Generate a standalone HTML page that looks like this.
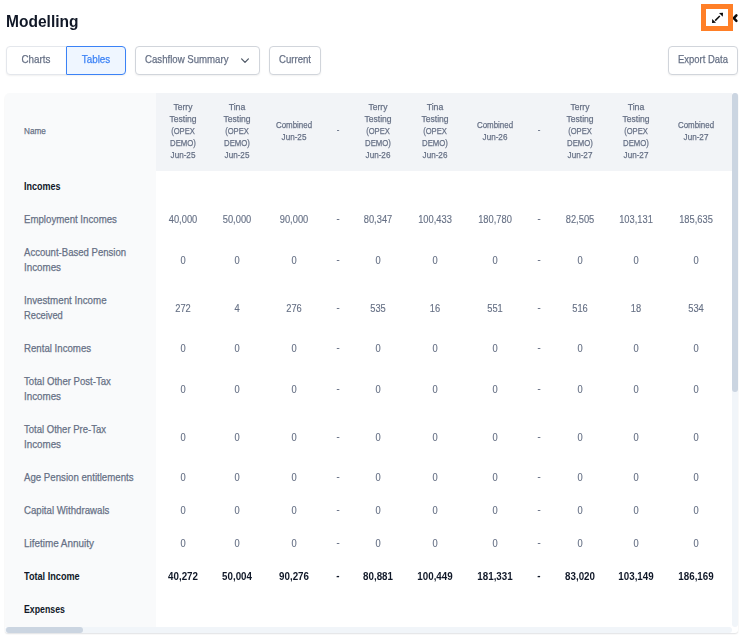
<!DOCTYPE html>
<html lang="en"><head><meta charset="utf-8"><title>Modelling</title>
<style>
html,body{margin:0;padding:0;background:#fff;}
body{width:746px;height:639px;position:relative;overflow:hidden;font-family:"Liberation Sans",Arial,sans-serif;}
.t{position:absolute;white-space:nowrap;line-height:1;display:block;margin:0;padding:0;font-weight:400;-webkit-text-stroke:0.25px currentColor;}
h1.t{font-weight:700;}
.abs{position:absolute;box-sizing:border-box;}
.btn{position:absolute;box-sizing:border-box;margin:0;padding:0;font:inherit;background:#fff;border:1px solid #d1d5db;border-radius:4px;box-shadow:0 1px 2px rgba(0,0,0,.06);overflow:visible;}
.tbl{border-radius:5px 3px 3px 3px;background:#fff;box-shadow:0 1px 1.5px rgba(16,24,40,.13);}
.row{display:contents;}
.glay{will-change:transform;}
.lay{left:0;top:0;width:727px;height:534px;will-change:transform;z-index:1;}
</style></head><body>
<header class="abs glay" style="left:0;top:0;width:696px;height:40px;">
<h1 class="t" style="left:6.20px;top:12.81px;font-size:17px;color:#111827;font-weight:700;-webkit-text-stroke:0;transform:scaleX(0.9140);transform-origin:0 50%;">Modelling</h1>
</header>
<div role="toolbar" aria-label="Modelling view" class="abs glay" style="left:0;top:40px;width:746px;height:44px;">
<button type="button" class="btn" style="left:6px;top:6px;width:61px;height:29px;border-radius:4px 0 0 4px;border-color:#e4e7ec;"><span class="t" style="left:29.20px;top:6.77px;font-size:11.5px;color:#667085;transform:translateX(-50%) scaleX(0.8562);transform-origin:50% 50%;">Charts</span></button>
<button type="button" class="btn" style="left:66px;top:6px;width:60px;height:29px;border-radius:1px 4px 4px 1px;border-color:#3b82f6;background:#eff6ff;"><span class="t" style="left:28.80px;top:6.77px;font-size:11.5px;color:#3b82f6;transform:translateX(-50%) scaleX(0.8573);transform-origin:50% 50%;">Tables</span></button>
<button type="button" class="btn" style="left:135px;top:6px;width:125px;height:29px;"><span class="t" style="left:9.00px;top:6.77px;font-size:11.5px;color:#667085;transform:scaleX(0.8375);transform-origin:0 50%;">Cashflow Summary</span><svg class="abs" style="left:104px;top:10px" width="10" height="8" viewBox="0 0 10 8" aria-hidden="true"><path d="M1.6 1.9 L5 5.3 L8.4 1.9" fill="none" stroke="#4b5563" stroke-width="1.2" stroke-linecap="round" stroke-linejoin="round"/></svg></button>
<button type="button" class="btn" style="left:269px;top:6px;width:52px;height:29px;"><span class="t" style="left:24.90px;top:6.77px;font-size:11.5px;color:#667085;transform:translateX(-50%) scaleX(0.8345);transform-origin:50% 50%;">Current</span></button>
<button type="button" class="btn" style="left:668px;top:6px;width:70px;height:29px;"><span class="t" style="left:34.30px;top:6.77px;font-size:11.5px;color:#667085;transform:translateX(-50%) scaleX(0.8234);transform-origin:50% 50%;">Export Data</span></button>
</div>
<svg class="abs" style="left:696px;top:0px" width="50" height="36" viewBox="696 0 50 36" role="img" aria-label="Expand">
<path d="M736.4 15.3 L733.8 18.1 L736.4 20.9" fill="none" stroke="#0b0b0b" stroke-width="2.5" stroke-linecap="round" stroke-linejoin="round"/>
<rect x="703.5" y="6.5" width="27" height="22" fill="#fff" stroke="#ff7f27" stroke-width="5"/>
<path d="M715.2 20.6 L719.8 16.0" fill="none" stroke="#0b0b0b" stroke-width="1.5"/>
<path d="M723 12.8 L719 13.0 L722.8 16.8 Z" fill="#0b0b0b"/>
<path d="M712 23 L716 22.8 L712.2 19 Z" fill="#0b0b0b"/>
</svg>
<div role="table" aria-label="Cashflow Summary" class="abs tbl" style="left:5px;top:93px;width:733px;height:540px;">
<div class="abs" style="left:151px;top:0;width:576px;height:78px;background:#f2f4f7;"></div>
<div class="abs" style="left:0;top:0;width:151px;height:534px;background:#f9fafb;border-radius:5px 0 0 0;"></div>
<div class="abs" style="left:727px;top:0;width:6px;height:534px;background:#f1f5f9;border-radius:3px;"></div>
<div class="abs" style="left:727px;top:0;width:6px;height:299px;background:#cbd5e1;border-radius:3px;"></div>
<div class="abs" style="left:0;top:534px;width:727px;height:6px;background:#f1f5f9;border-radius:3px;"></div>
<div class="abs" style="left:1px;top:534px;width:77px;height:6px;background:#cbd5e1;border-radius:3px;"></div>
<div role="row" class="row">
<span class="t" role="columnheader" style="left:19.00px;top:32.96px;font-size:9.5px;color:#667085;-webkit-text-stroke:0.25px currentColor;transform:scaleX(0.8600);transform-origin:0 50%;">Name</span>
<div class="abs lay" role="presentation">
<div role="columnheader" class="row"><span class="t" style="left:177.70px;top:9.36px;font-size:9.5px;color:#667085;-webkit-text-stroke:0.25px currentColor;transform:translateX(-50%) scaleX(0.8975);transform-origin:50% 50%;">Terry</span><span class="t" style="left:177.70px;top:21.36px;font-size:9.5px;color:#667085;-webkit-text-stroke:0.25px currentColor;transform:translateX(-50%) scaleX(0.9005);transform-origin:50% 50%;">Testing</span><span class="t" style="left:177.70px;top:33.36px;font-size:9.5px;color:#667085;-webkit-text-stroke:0.25px currentColor;transform:translateX(-50%) scaleX(0.8030);transform-origin:50% 50%;">(OPEX</span><span class="t" style="left:177.70px;top:45.36px;font-size:9.5px;color:#667085;-webkit-text-stroke:0.25px currentColor;transform:translateX(-50%) scaleX(0.8167);transform-origin:50% 50%;">DEMO)</span><span class="t" style="left:177.70px;top:57.36px;font-size:9.5px;color:#667085;-webkit-text-stroke:0.25px currentColor;transform:translateX(-50%) scaleX(0.8530);transform-origin:50% 50%;">Jun-25</span></div>
<div role="columnheader" class="row"><span class="t" style="left:231.50px;top:9.36px;font-size:9.5px;color:#667085;-webkit-text-stroke:0.25px currentColor;transform:translateX(-50%) scaleX(0.9200);transform-origin:50% 50%;">Tina</span><span class="t" style="left:231.50px;top:21.36px;font-size:9.5px;color:#667085;-webkit-text-stroke:0.25px currentColor;transform:translateX(-50%) scaleX(0.9005);transform-origin:50% 50%;">Testing</span><span class="t" style="left:231.50px;top:33.36px;font-size:9.5px;color:#667085;-webkit-text-stroke:0.25px currentColor;transform:translateX(-50%) scaleX(0.8030);transform-origin:50% 50%;">(OPEX</span><span class="t" style="left:231.50px;top:45.36px;font-size:9.5px;color:#667085;-webkit-text-stroke:0.25px currentColor;transform:translateX(-50%) scaleX(0.8167);transform-origin:50% 50%;">DEMO)</span><span class="t" style="left:231.50px;top:57.36px;font-size:9.5px;color:#667085;-webkit-text-stroke:0.25px currentColor;transform:translateX(-50%) scaleX(0.8530);transform-origin:50% 50%;">Jun-25</span></div>
<div role="columnheader" class="row"><span class="t" style="left:288.70px;top:26.96px;font-size:9.5px;color:#667085;-webkit-text-stroke:0.25px currentColor;transform:translateX(-50%) scaleX(0.8347);transform-origin:50% 50%;">Combined</span><span class="t" style="left:288.70px;top:38.96px;font-size:9.5px;color:#667085;-webkit-text-stroke:0.25px currentColor;transform:translateX(-50%) scaleX(0.8530);transform-origin:50% 50%;">Jun-25</span></div>
<span class="t" role="columnheader" style="left:332.70px;top:32.16px;font-size:9.5px;color:#667085;-webkit-text-stroke:0.25px currentColor;transform:translateX(-50%) scaleX(0.8300);transform-origin:50% 50%;">-</span>
<div role="columnheader" class="row"><span class="t" style="left:373.40px;top:9.36px;font-size:9.5px;color:#667085;-webkit-text-stroke:0.25px currentColor;transform:translateX(-50%) scaleX(0.8975);transform-origin:50% 50%;">Terry</span><span class="t" style="left:373.40px;top:21.36px;font-size:9.5px;color:#667085;-webkit-text-stroke:0.25px currentColor;transform:translateX(-50%) scaleX(0.9005);transform-origin:50% 50%;">Testing</span><span class="t" style="left:373.40px;top:33.36px;font-size:9.5px;color:#667085;-webkit-text-stroke:0.25px currentColor;transform:translateX(-50%) scaleX(0.8030);transform-origin:50% 50%;">(OPEX</span><span class="t" style="left:373.40px;top:45.36px;font-size:9.5px;color:#667085;-webkit-text-stroke:0.25px currentColor;transform:translateX(-50%) scaleX(0.8167);transform-origin:50% 50%;">DEMO)</span><span class="t" style="left:373.40px;top:57.36px;font-size:9.5px;color:#667085;-webkit-text-stroke:0.25px currentColor;transform:translateX(-50%) scaleX(0.8530);transform-origin:50% 50%;">Jun-26</span></div>
<div role="columnheader" class="row"><span class="t" style="left:429.90px;top:9.36px;font-size:9.5px;color:#667085;-webkit-text-stroke:0.25px currentColor;transform:translateX(-50%) scaleX(0.9200);transform-origin:50% 50%;">Tina</span><span class="t" style="left:429.90px;top:21.36px;font-size:9.5px;color:#667085;-webkit-text-stroke:0.25px currentColor;transform:translateX(-50%) scaleX(0.9005);transform-origin:50% 50%;">Testing</span><span class="t" style="left:429.90px;top:33.36px;font-size:9.5px;color:#667085;-webkit-text-stroke:0.25px currentColor;transform:translateX(-50%) scaleX(0.8030);transform-origin:50% 50%;">(OPEX</span><span class="t" style="left:429.90px;top:45.36px;font-size:9.5px;color:#667085;-webkit-text-stroke:0.25px currentColor;transform:translateX(-50%) scaleX(0.8167);transform-origin:50% 50%;">DEMO)</span><span class="t" style="left:429.90px;top:57.36px;font-size:9.5px;color:#667085;-webkit-text-stroke:0.25px currentColor;transform:translateX(-50%) scaleX(0.8530);transform-origin:50% 50%;">Jun-26</span></div>
<div role="columnheader" class="row"><span class="t" style="left:489.80px;top:26.96px;font-size:9.5px;color:#667085;-webkit-text-stroke:0.25px currentColor;transform:translateX(-50%) scaleX(0.8347);transform-origin:50% 50%;">Combined</span><span class="t" style="left:489.80px;top:38.96px;font-size:9.5px;color:#667085;-webkit-text-stroke:0.25px currentColor;transform:translateX(-50%) scaleX(0.8530);transform-origin:50% 50%;">Jun-26</span></div>
<span class="t" role="columnheader" style="left:534.30px;top:32.16px;font-size:9.5px;color:#667085;-webkit-text-stroke:0.25px currentColor;transform:translateX(-50%) scaleX(0.8300);transform-origin:50% 50%;">-</span>
<div role="columnheader" class="row"><span class="t" style="left:574.90px;top:9.36px;font-size:9.5px;color:#667085;-webkit-text-stroke:0.25px currentColor;transform:translateX(-50%) scaleX(0.8975);transform-origin:50% 50%;">Terry</span><span class="t" style="left:574.90px;top:21.36px;font-size:9.5px;color:#667085;-webkit-text-stroke:0.25px currentColor;transform:translateX(-50%) scaleX(0.9005);transform-origin:50% 50%;">Testing</span><span class="t" style="left:574.90px;top:33.36px;font-size:9.5px;color:#667085;-webkit-text-stroke:0.25px currentColor;transform:translateX(-50%) scaleX(0.8030);transform-origin:50% 50%;">(OPEX</span><span class="t" style="left:574.90px;top:45.36px;font-size:9.5px;color:#667085;-webkit-text-stroke:0.25px currentColor;transform:translateX(-50%) scaleX(0.8167);transform-origin:50% 50%;">DEMO)</span><span class="t" style="left:574.90px;top:57.36px;font-size:9.5px;color:#667085;-webkit-text-stroke:0.25px currentColor;transform:translateX(-50%) scaleX(0.8530);transform-origin:50% 50%;">Jun-27</span></div>
<div role="columnheader" class="row"><span class="t" style="left:631.00px;top:9.36px;font-size:9.5px;color:#667085;-webkit-text-stroke:0.25px currentColor;transform:translateX(-50%) scaleX(0.9200);transform-origin:50% 50%;">Tina</span><span class="t" style="left:631.00px;top:21.36px;font-size:9.5px;color:#667085;-webkit-text-stroke:0.25px currentColor;transform:translateX(-50%) scaleX(0.9005);transform-origin:50% 50%;">Testing</span><span class="t" style="left:631.00px;top:33.36px;font-size:9.5px;color:#667085;-webkit-text-stroke:0.25px currentColor;transform:translateX(-50%) scaleX(0.8030);transform-origin:50% 50%;">(OPEX</span><span class="t" style="left:631.00px;top:45.36px;font-size:9.5px;color:#667085;-webkit-text-stroke:0.25px currentColor;transform:translateX(-50%) scaleX(0.8167);transform-origin:50% 50%;">DEMO)</span><span class="t" style="left:631.00px;top:57.36px;font-size:9.5px;color:#667085;-webkit-text-stroke:0.25px currentColor;transform:translateX(-50%) scaleX(0.8530);transform-origin:50% 50%;">Jun-27</span></div>
<div role="columnheader" class="row"><span class="t" style="left:690.70px;top:26.96px;font-size:9.5px;color:#667085;-webkit-text-stroke:0.25px currentColor;transform:translateX(-50%) scaleX(0.8347);transform-origin:50% 50%;">Combined</span><span class="t" style="left:690.70px;top:38.96px;font-size:9.5px;color:#667085;-webkit-text-stroke:0.25px currentColor;transform:translateX(-50%) scaleX(0.8530);transform-origin:50% 50%;">Jun-27</span></div>
</div></div>
<div role="row" class="row">
<span class="t" role="rowheader" style="left:19.00px;top:88.27px;font-size:11.5px;color:#101828;font-weight:700;-webkit-text-stroke:0;transform:scaleX(0.7830);transform-origin:0 50%;">Incomes</span>
</div>
<div role="row" class="row">
<span class="t" role="rowheader" style="left:19.00px;top:121.27px;font-size:11.5px;color:#667085;-webkit-text-stroke:0.25px currentColor;transform:scaleX(0.8400);transform-origin:0 50%;">Employment Incomes</span>
<div class="abs lay" role="presentation">
<span class="t" role="cell" style="left:177.70px;top:121.27px;font-size:11.5px;color:#667085;-webkit-text-stroke:0.15px currentColor;transform:translateX(-50%) scaleX(0.8100);transform-origin:50% 50%;">40,000</span>
<span class="t" role="cell" style="left:231.50px;top:121.27px;font-size:11.5px;color:#667085;-webkit-text-stroke:0.15px currentColor;transform:translateX(-50%) scaleX(0.8100);transform-origin:50% 50%;">50,000</span>
<span class="t" role="cell" style="left:288.70px;top:121.27px;font-size:11.5px;color:#667085;-webkit-text-stroke:0.15px currentColor;transform:translateX(-50%) scaleX(0.8100);transform-origin:50% 50%;">90,000</span>
<span class="t" role="cell" style="left:332.70px;top:120.37px;font-size:11.5px;color:#667085;-webkit-text-stroke:0.15px currentColor;transform:translateX(-50%) scaleX(0.8100);transform-origin:50% 50%;">-</span>
<span class="t" role="cell" style="left:373.40px;top:121.27px;font-size:11.5px;color:#667085;-webkit-text-stroke:0.15px currentColor;transform:translateX(-50%) scaleX(0.8100);transform-origin:50% 50%;">80,347</span>
<span class="t" role="cell" style="left:429.90px;top:121.27px;font-size:11.5px;color:#667085;-webkit-text-stroke:0.15px currentColor;transform:translateX(-50%) scaleX(0.8100);transform-origin:50% 50%;">100,433</span>
<span class="t" role="cell" style="left:489.80px;top:121.27px;font-size:11.5px;color:#667085;-webkit-text-stroke:0.15px currentColor;transform:translateX(-50%) scaleX(0.8100);transform-origin:50% 50%;">180,780</span>
<span class="t" role="cell" style="left:534.30px;top:120.37px;font-size:11.5px;color:#667085;-webkit-text-stroke:0.15px currentColor;transform:translateX(-50%) scaleX(0.8100);transform-origin:50% 50%;">-</span>
<span class="t" role="cell" style="left:574.90px;top:121.27px;font-size:11.5px;color:#667085;-webkit-text-stroke:0.15px currentColor;transform:translateX(-50%) scaleX(0.8100);transform-origin:50% 50%;">82,505</span>
<span class="t" role="cell" style="left:631.00px;top:121.27px;font-size:11.5px;color:#667085;-webkit-text-stroke:0.15px currentColor;transform:translateX(-50%) scaleX(0.8100);transform-origin:50% 50%;">103,131</span>
<span class="t" role="cell" style="left:690.70px;top:121.27px;font-size:11.5px;color:#667085;-webkit-text-stroke:0.15px currentColor;transform:translateX(-50%) scaleX(0.8100);transform-origin:50% 50%;">185,635</span>
</div>
</div>
<div role="row" class="row">
<div role="rowheader" class="row"><span class="t" style="left:19.00px;top:154.27px;font-size:11.5px;color:#667085;-webkit-text-stroke:0.25px currentColor;transform:scaleX(0.8320);transform-origin:0 50%;">Account-Based Pension</span><span class="t" style="left:19.00px;top:169.27px;font-size:11.5px;color:#667085;-webkit-text-stroke:0.25px currentColor;transform:scaleX(0.8516);transform-origin:0 50%;">Incomes</span></div>
<div class="abs lay" role="presentation">
<span class="t" role="cell" style="left:177.70px;top:161.77px;font-size:11.5px;color:#667085;-webkit-text-stroke:0.15px currentColor;transform:translateX(-50%) scaleX(0.8100);transform-origin:50% 50%;">0</span>
<span class="t" role="cell" style="left:231.50px;top:161.77px;font-size:11.5px;color:#667085;-webkit-text-stroke:0.15px currentColor;transform:translateX(-50%) scaleX(0.8100);transform-origin:50% 50%;">0</span>
<span class="t" role="cell" style="left:288.70px;top:161.77px;font-size:11.5px;color:#667085;-webkit-text-stroke:0.15px currentColor;transform:translateX(-50%) scaleX(0.8100);transform-origin:50% 50%;">0</span>
<span class="t" role="cell" style="left:332.70px;top:160.87px;font-size:11.5px;color:#667085;-webkit-text-stroke:0.15px currentColor;transform:translateX(-50%) scaleX(0.8100);transform-origin:50% 50%;">-</span>
<span class="t" role="cell" style="left:373.40px;top:161.77px;font-size:11.5px;color:#667085;-webkit-text-stroke:0.15px currentColor;transform:translateX(-50%) scaleX(0.8100);transform-origin:50% 50%;">0</span>
<span class="t" role="cell" style="left:429.90px;top:161.77px;font-size:11.5px;color:#667085;-webkit-text-stroke:0.15px currentColor;transform:translateX(-50%) scaleX(0.8100);transform-origin:50% 50%;">0</span>
<span class="t" role="cell" style="left:489.80px;top:161.77px;font-size:11.5px;color:#667085;-webkit-text-stroke:0.15px currentColor;transform:translateX(-50%) scaleX(0.8100);transform-origin:50% 50%;">0</span>
<span class="t" role="cell" style="left:534.30px;top:160.87px;font-size:11.5px;color:#667085;-webkit-text-stroke:0.15px currentColor;transform:translateX(-50%) scaleX(0.8100);transform-origin:50% 50%;">-</span>
<span class="t" role="cell" style="left:574.90px;top:161.77px;font-size:11.5px;color:#667085;-webkit-text-stroke:0.15px currentColor;transform:translateX(-50%) scaleX(0.8100);transform-origin:50% 50%;">0</span>
<span class="t" role="cell" style="left:631.00px;top:161.77px;font-size:11.5px;color:#667085;-webkit-text-stroke:0.15px currentColor;transform:translateX(-50%) scaleX(0.8100);transform-origin:50% 50%;">0</span>
<span class="t" role="cell" style="left:690.70px;top:161.77px;font-size:11.5px;color:#667085;-webkit-text-stroke:0.15px currentColor;transform:translateX(-50%) scaleX(0.8100);transform-origin:50% 50%;">0</span>
</div>
</div>
<div role="row" class="row">
<div role="rowheader" class="row"><span class="t" style="left:19.00px;top:202.27px;font-size:11.5px;color:#667085;-webkit-text-stroke:0.25px currentColor;transform:scaleX(0.8500);transform-origin:0 50%;">Investment Income</span><span class="t" style="left:19.00px;top:217.27px;font-size:11.5px;color:#667085;-webkit-text-stroke:0.25px currentColor;transform:scaleX(0.8085);transform-origin:0 50%;">Received</span></div>
<div class="abs lay" role="presentation">
<span class="t" role="cell" style="left:177.70px;top:209.77px;font-size:11.5px;color:#667085;-webkit-text-stroke:0.15px currentColor;transform:translateX(-50%) scaleX(0.8100);transform-origin:50% 50%;">272</span>
<span class="t" role="cell" style="left:231.50px;top:209.77px;font-size:11.5px;color:#667085;-webkit-text-stroke:0.15px currentColor;transform:translateX(-50%) scaleX(0.8100);transform-origin:50% 50%;">4</span>
<span class="t" role="cell" style="left:288.70px;top:209.77px;font-size:11.5px;color:#667085;-webkit-text-stroke:0.15px currentColor;transform:translateX(-50%) scaleX(0.8100);transform-origin:50% 50%;">276</span>
<span class="t" role="cell" style="left:332.70px;top:208.87px;font-size:11.5px;color:#667085;-webkit-text-stroke:0.15px currentColor;transform:translateX(-50%) scaleX(0.8100);transform-origin:50% 50%;">-</span>
<span class="t" role="cell" style="left:373.40px;top:209.77px;font-size:11.5px;color:#667085;-webkit-text-stroke:0.15px currentColor;transform:translateX(-50%) scaleX(0.8100);transform-origin:50% 50%;">535</span>
<span class="t" role="cell" style="left:429.90px;top:209.77px;font-size:11.5px;color:#667085;-webkit-text-stroke:0.15px currentColor;transform:translateX(-50%) scaleX(0.8100);transform-origin:50% 50%;">16</span>
<span class="t" role="cell" style="left:489.80px;top:209.77px;font-size:11.5px;color:#667085;-webkit-text-stroke:0.15px currentColor;transform:translateX(-50%) scaleX(0.8100);transform-origin:50% 50%;">551</span>
<span class="t" role="cell" style="left:534.30px;top:208.87px;font-size:11.5px;color:#667085;-webkit-text-stroke:0.15px currentColor;transform:translateX(-50%) scaleX(0.8100);transform-origin:50% 50%;">-</span>
<span class="t" role="cell" style="left:574.90px;top:209.77px;font-size:11.5px;color:#667085;-webkit-text-stroke:0.15px currentColor;transform:translateX(-50%) scaleX(0.8100);transform-origin:50% 50%;">516</span>
<span class="t" role="cell" style="left:631.00px;top:209.77px;font-size:11.5px;color:#667085;-webkit-text-stroke:0.15px currentColor;transform:translateX(-50%) scaleX(0.8100);transform-origin:50% 50%;">18</span>
<span class="t" role="cell" style="left:690.70px;top:209.77px;font-size:11.5px;color:#667085;-webkit-text-stroke:0.15px currentColor;transform:translateX(-50%) scaleX(0.8100);transform-origin:50% 50%;">534</span>
</div>
</div>
<div role="row" class="row">
<span class="t" role="rowheader" style="left:19.00px;top:250.27px;font-size:11.5px;color:#667085;-webkit-text-stroke:0.25px currentColor;transform:scaleX(0.8400);transform-origin:0 50%;">Rental Incomes</span>
<div class="abs lay" role="presentation">
<span class="t" role="cell" style="left:177.70px;top:250.27px;font-size:11.5px;color:#667085;-webkit-text-stroke:0.15px currentColor;transform:translateX(-50%) scaleX(0.8100);transform-origin:50% 50%;">0</span>
<span class="t" role="cell" style="left:231.50px;top:250.27px;font-size:11.5px;color:#667085;-webkit-text-stroke:0.15px currentColor;transform:translateX(-50%) scaleX(0.8100);transform-origin:50% 50%;">0</span>
<span class="t" role="cell" style="left:288.70px;top:250.27px;font-size:11.5px;color:#667085;-webkit-text-stroke:0.15px currentColor;transform:translateX(-50%) scaleX(0.8100);transform-origin:50% 50%;">0</span>
<span class="t" role="cell" style="left:332.70px;top:249.37px;font-size:11.5px;color:#667085;-webkit-text-stroke:0.15px currentColor;transform:translateX(-50%) scaleX(0.8100);transform-origin:50% 50%;">-</span>
<span class="t" role="cell" style="left:373.40px;top:250.27px;font-size:11.5px;color:#667085;-webkit-text-stroke:0.15px currentColor;transform:translateX(-50%) scaleX(0.8100);transform-origin:50% 50%;">0</span>
<span class="t" role="cell" style="left:429.90px;top:250.27px;font-size:11.5px;color:#667085;-webkit-text-stroke:0.15px currentColor;transform:translateX(-50%) scaleX(0.8100);transform-origin:50% 50%;">0</span>
<span class="t" role="cell" style="left:489.80px;top:250.27px;font-size:11.5px;color:#667085;-webkit-text-stroke:0.15px currentColor;transform:translateX(-50%) scaleX(0.8100);transform-origin:50% 50%;">0</span>
<span class="t" role="cell" style="left:534.30px;top:249.37px;font-size:11.5px;color:#667085;-webkit-text-stroke:0.15px currentColor;transform:translateX(-50%) scaleX(0.8100);transform-origin:50% 50%;">-</span>
<span class="t" role="cell" style="left:574.90px;top:250.27px;font-size:11.5px;color:#667085;-webkit-text-stroke:0.15px currentColor;transform:translateX(-50%) scaleX(0.8100);transform-origin:50% 50%;">0</span>
<span class="t" role="cell" style="left:631.00px;top:250.27px;font-size:11.5px;color:#667085;-webkit-text-stroke:0.15px currentColor;transform:translateX(-50%) scaleX(0.8100);transform-origin:50% 50%;">0</span>
<span class="t" role="cell" style="left:690.70px;top:250.27px;font-size:11.5px;color:#667085;-webkit-text-stroke:0.15px currentColor;transform:translateX(-50%) scaleX(0.8100);transform-origin:50% 50%;">0</span>
</div>
</div>
<div role="row" class="row">
<div role="rowheader" class="row"><span class="t" style="left:19.00px;top:283.27px;font-size:11.5px;color:#667085;-webkit-text-stroke:0.25px currentColor;transform:scaleX(0.8340);transform-origin:0 50%;">Total Other Post-Tax</span><span class="t" style="left:19.00px;top:298.27px;font-size:11.5px;color:#667085;-webkit-text-stroke:0.25px currentColor;transform:scaleX(0.8516);transform-origin:0 50%;">Incomes</span></div>
<div class="abs lay" role="presentation">
<span class="t" role="cell" style="left:177.70px;top:290.77px;font-size:11.5px;color:#667085;-webkit-text-stroke:0.15px currentColor;transform:translateX(-50%) scaleX(0.8100);transform-origin:50% 50%;">0</span>
<span class="t" role="cell" style="left:231.50px;top:290.77px;font-size:11.5px;color:#667085;-webkit-text-stroke:0.15px currentColor;transform:translateX(-50%) scaleX(0.8100);transform-origin:50% 50%;">0</span>
<span class="t" role="cell" style="left:288.70px;top:290.77px;font-size:11.5px;color:#667085;-webkit-text-stroke:0.15px currentColor;transform:translateX(-50%) scaleX(0.8100);transform-origin:50% 50%;">0</span>
<span class="t" role="cell" style="left:332.70px;top:289.87px;font-size:11.5px;color:#667085;-webkit-text-stroke:0.15px currentColor;transform:translateX(-50%) scaleX(0.8100);transform-origin:50% 50%;">-</span>
<span class="t" role="cell" style="left:373.40px;top:290.77px;font-size:11.5px;color:#667085;-webkit-text-stroke:0.15px currentColor;transform:translateX(-50%) scaleX(0.8100);transform-origin:50% 50%;">0</span>
<span class="t" role="cell" style="left:429.90px;top:290.77px;font-size:11.5px;color:#667085;-webkit-text-stroke:0.15px currentColor;transform:translateX(-50%) scaleX(0.8100);transform-origin:50% 50%;">0</span>
<span class="t" role="cell" style="left:489.80px;top:290.77px;font-size:11.5px;color:#667085;-webkit-text-stroke:0.15px currentColor;transform:translateX(-50%) scaleX(0.8100);transform-origin:50% 50%;">0</span>
<span class="t" role="cell" style="left:534.30px;top:289.87px;font-size:11.5px;color:#667085;-webkit-text-stroke:0.15px currentColor;transform:translateX(-50%) scaleX(0.8100);transform-origin:50% 50%;">-</span>
<span class="t" role="cell" style="left:574.90px;top:290.77px;font-size:11.5px;color:#667085;-webkit-text-stroke:0.15px currentColor;transform:translateX(-50%) scaleX(0.8100);transform-origin:50% 50%;">0</span>
<span class="t" role="cell" style="left:631.00px;top:290.77px;font-size:11.5px;color:#667085;-webkit-text-stroke:0.15px currentColor;transform:translateX(-50%) scaleX(0.8100);transform-origin:50% 50%;">0</span>
<span class="t" role="cell" style="left:690.70px;top:290.77px;font-size:11.5px;color:#667085;-webkit-text-stroke:0.15px currentColor;transform:translateX(-50%) scaleX(0.8100);transform-origin:50% 50%;">0</span>
</div>
</div>
<div role="row" class="row">
<div role="rowheader" class="row"><span class="t" style="left:19.00px;top:331.27px;font-size:11.5px;color:#667085;-webkit-text-stroke:0.25px currentColor;transform:scaleX(0.8280);transform-origin:0 50%;">Total Other Pre-Tax</span><span class="t" style="left:19.00px;top:346.27px;font-size:11.5px;color:#667085;-webkit-text-stroke:0.25px currentColor;transform:scaleX(0.8516);transform-origin:0 50%;">Incomes</span></div>
<div class="abs lay" role="presentation">
<span class="t" role="cell" style="left:177.70px;top:338.77px;font-size:11.5px;color:#667085;-webkit-text-stroke:0.15px currentColor;transform:translateX(-50%) scaleX(0.8100);transform-origin:50% 50%;">0</span>
<span class="t" role="cell" style="left:231.50px;top:338.77px;font-size:11.5px;color:#667085;-webkit-text-stroke:0.15px currentColor;transform:translateX(-50%) scaleX(0.8100);transform-origin:50% 50%;">0</span>
<span class="t" role="cell" style="left:288.70px;top:338.77px;font-size:11.5px;color:#667085;-webkit-text-stroke:0.15px currentColor;transform:translateX(-50%) scaleX(0.8100);transform-origin:50% 50%;">0</span>
<span class="t" role="cell" style="left:332.70px;top:337.87px;font-size:11.5px;color:#667085;-webkit-text-stroke:0.15px currentColor;transform:translateX(-50%) scaleX(0.8100);transform-origin:50% 50%;">-</span>
<span class="t" role="cell" style="left:373.40px;top:338.77px;font-size:11.5px;color:#667085;-webkit-text-stroke:0.15px currentColor;transform:translateX(-50%) scaleX(0.8100);transform-origin:50% 50%;">0</span>
<span class="t" role="cell" style="left:429.90px;top:338.77px;font-size:11.5px;color:#667085;-webkit-text-stroke:0.15px currentColor;transform:translateX(-50%) scaleX(0.8100);transform-origin:50% 50%;">0</span>
<span class="t" role="cell" style="left:489.80px;top:338.77px;font-size:11.5px;color:#667085;-webkit-text-stroke:0.15px currentColor;transform:translateX(-50%) scaleX(0.8100);transform-origin:50% 50%;">0</span>
<span class="t" role="cell" style="left:534.30px;top:337.87px;font-size:11.5px;color:#667085;-webkit-text-stroke:0.15px currentColor;transform:translateX(-50%) scaleX(0.8100);transform-origin:50% 50%;">-</span>
<span class="t" role="cell" style="left:574.90px;top:338.77px;font-size:11.5px;color:#667085;-webkit-text-stroke:0.15px currentColor;transform:translateX(-50%) scaleX(0.8100);transform-origin:50% 50%;">0</span>
<span class="t" role="cell" style="left:631.00px;top:338.77px;font-size:11.5px;color:#667085;-webkit-text-stroke:0.15px currentColor;transform:translateX(-50%) scaleX(0.8100);transform-origin:50% 50%;">0</span>
<span class="t" role="cell" style="left:690.70px;top:338.77px;font-size:11.5px;color:#667085;-webkit-text-stroke:0.15px currentColor;transform:translateX(-50%) scaleX(0.8100);transform-origin:50% 50%;">0</span>
</div>
</div>
<div role="row" class="row">
<span class="t" role="rowheader" style="left:19.00px;top:379.27px;font-size:11.5px;color:#667085;-webkit-text-stroke:0.25px currentColor;transform:scaleX(0.8400);transform-origin:0 50%;">Age Pension entitlements</span>
<div class="abs lay" role="presentation">
<span class="t" role="cell" style="left:177.70px;top:379.27px;font-size:11.5px;color:#667085;-webkit-text-stroke:0.15px currentColor;transform:translateX(-50%) scaleX(0.8100);transform-origin:50% 50%;">0</span>
<span class="t" role="cell" style="left:231.50px;top:379.27px;font-size:11.5px;color:#667085;-webkit-text-stroke:0.15px currentColor;transform:translateX(-50%) scaleX(0.8100);transform-origin:50% 50%;">0</span>
<span class="t" role="cell" style="left:288.70px;top:379.27px;font-size:11.5px;color:#667085;-webkit-text-stroke:0.15px currentColor;transform:translateX(-50%) scaleX(0.8100);transform-origin:50% 50%;">0</span>
<span class="t" role="cell" style="left:332.70px;top:378.37px;font-size:11.5px;color:#667085;-webkit-text-stroke:0.15px currentColor;transform:translateX(-50%) scaleX(0.8100);transform-origin:50% 50%;">-</span>
<span class="t" role="cell" style="left:373.40px;top:379.27px;font-size:11.5px;color:#667085;-webkit-text-stroke:0.15px currentColor;transform:translateX(-50%) scaleX(0.8100);transform-origin:50% 50%;">0</span>
<span class="t" role="cell" style="left:429.90px;top:379.27px;font-size:11.5px;color:#667085;-webkit-text-stroke:0.15px currentColor;transform:translateX(-50%) scaleX(0.8100);transform-origin:50% 50%;">0</span>
<span class="t" role="cell" style="left:489.80px;top:379.27px;font-size:11.5px;color:#667085;-webkit-text-stroke:0.15px currentColor;transform:translateX(-50%) scaleX(0.8100);transform-origin:50% 50%;">0</span>
<span class="t" role="cell" style="left:534.30px;top:378.37px;font-size:11.5px;color:#667085;-webkit-text-stroke:0.15px currentColor;transform:translateX(-50%) scaleX(0.8100);transform-origin:50% 50%;">-</span>
<span class="t" role="cell" style="left:574.90px;top:379.27px;font-size:11.5px;color:#667085;-webkit-text-stroke:0.15px currentColor;transform:translateX(-50%) scaleX(0.8100);transform-origin:50% 50%;">0</span>
<span class="t" role="cell" style="left:631.00px;top:379.27px;font-size:11.5px;color:#667085;-webkit-text-stroke:0.15px currentColor;transform:translateX(-50%) scaleX(0.8100);transform-origin:50% 50%;">0</span>
<span class="t" role="cell" style="left:690.70px;top:379.27px;font-size:11.5px;color:#667085;-webkit-text-stroke:0.15px currentColor;transform:translateX(-50%) scaleX(0.8100);transform-origin:50% 50%;">0</span>
</div>
</div>
<div role="row" class="row">
<span class="t" role="rowheader" style="left:19.00px;top:412.27px;font-size:11.5px;color:#667085;-webkit-text-stroke:0.25px currentColor;transform:scaleX(0.8400);transform-origin:0 50%;">Capital Withdrawals</span>
<div class="abs lay" role="presentation">
<span class="t" role="cell" style="left:177.70px;top:412.27px;font-size:11.5px;color:#667085;-webkit-text-stroke:0.15px currentColor;transform:translateX(-50%) scaleX(0.8100);transform-origin:50% 50%;">0</span>
<span class="t" role="cell" style="left:231.50px;top:412.27px;font-size:11.5px;color:#667085;-webkit-text-stroke:0.15px currentColor;transform:translateX(-50%) scaleX(0.8100);transform-origin:50% 50%;">0</span>
<span class="t" role="cell" style="left:288.70px;top:412.27px;font-size:11.5px;color:#667085;-webkit-text-stroke:0.15px currentColor;transform:translateX(-50%) scaleX(0.8100);transform-origin:50% 50%;">0</span>
<span class="t" role="cell" style="left:332.70px;top:411.37px;font-size:11.5px;color:#667085;-webkit-text-stroke:0.15px currentColor;transform:translateX(-50%) scaleX(0.8100);transform-origin:50% 50%;">-</span>
<span class="t" role="cell" style="left:373.40px;top:412.27px;font-size:11.5px;color:#667085;-webkit-text-stroke:0.15px currentColor;transform:translateX(-50%) scaleX(0.8100);transform-origin:50% 50%;">0</span>
<span class="t" role="cell" style="left:429.90px;top:412.27px;font-size:11.5px;color:#667085;-webkit-text-stroke:0.15px currentColor;transform:translateX(-50%) scaleX(0.8100);transform-origin:50% 50%;">0</span>
<span class="t" role="cell" style="left:489.80px;top:412.27px;font-size:11.5px;color:#667085;-webkit-text-stroke:0.15px currentColor;transform:translateX(-50%) scaleX(0.8100);transform-origin:50% 50%;">0</span>
<span class="t" role="cell" style="left:534.30px;top:411.37px;font-size:11.5px;color:#667085;-webkit-text-stroke:0.15px currentColor;transform:translateX(-50%) scaleX(0.8100);transform-origin:50% 50%;">-</span>
<span class="t" role="cell" style="left:574.90px;top:412.27px;font-size:11.5px;color:#667085;-webkit-text-stroke:0.15px currentColor;transform:translateX(-50%) scaleX(0.8100);transform-origin:50% 50%;">0</span>
<span class="t" role="cell" style="left:631.00px;top:412.27px;font-size:11.5px;color:#667085;-webkit-text-stroke:0.15px currentColor;transform:translateX(-50%) scaleX(0.8100);transform-origin:50% 50%;">0</span>
<span class="t" role="cell" style="left:690.70px;top:412.27px;font-size:11.5px;color:#667085;-webkit-text-stroke:0.15px currentColor;transform:translateX(-50%) scaleX(0.8100);transform-origin:50% 50%;">0</span>
</div>
</div>
<div role="row" class="row">
<span class="t" role="rowheader" style="left:19.00px;top:445.27px;font-size:11.5px;color:#667085;-webkit-text-stroke:0.25px currentColor;transform:scaleX(0.8610);transform-origin:0 50%;">Lifetime Annuity</span>
<div class="abs lay" role="presentation">
<span class="t" role="cell" style="left:177.70px;top:445.27px;font-size:11.5px;color:#667085;-webkit-text-stroke:0.15px currentColor;transform:translateX(-50%) scaleX(0.8100);transform-origin:50% 50%;">0</span>
<span class="t" role="cell" style="left:231.50px;top:445.27px;font-size:11.5px;color:#667085;-webkit-text-stroke:0.15px currentColor;transform:translateX(-50%) scaleX(0.8100);transform-origin:50% 50%;">0</span>
<span class="t" role="cell" style="left:288.70px;top:445.27px;font-size:11.5px;color:#667085;-webkit-text-stroke:0.15px currentColor;transform:translateX(-50%) scaleX(0.8100);transform-origin:50% 50%;">0</span>
<span class="t" role="cell" style="left:332.70px;top:444.37px;font-size:11.5px;color:#667085;-webkit-text-stroke:0.15px currentColor;transform:translateX(-50%) scaleX(0.8100);transform-origin:50% 50%;">-</span>
<span class="t" role="cell" style="left:373.40px;top:445.27px;font-size:11.5px;color:#667085;-webkit-text-stroke:0.15px currentColor;transform:translateX(-50%) scaleX(0.8100);transform-origin:50% 50%;">0</span>
<span class="t" role="cell" style="left:429.90px;top:445.27px;font-size:11.5px;color:#667085;-webkit-text-stroke:0.15px currentColor;transform:translateX(-50%) scaleX(0.8100);transform-origin:50% 50%;">0</span>
<span class="t" role="cell" style="left:489.80px;top:445.27px;font-size:11.5px;color:#667085;-webkit-text-stroke:0.15px currentColor;transform:translateX(-50%) scaleX(0.8100);transform-origin:50% 50%;">0</span>
<span class="t" role="cell" style="left:534.30px;top:444.37px;font-size:11.5px;color:#667085;-webkit-text-stroke:0.15px currentColor;transform:translateX(-50%) scaleX(0.8100);transform-origin:50% 50%;">-</span>
<span class="t" role="cell" style="left:574.90px;top:445.27px;font-size:11.5px;color:#667085;-webkit-text-stroke:0.15px currentColor;transform:translateX(-50%) scaleX(0.8100);transform-origin:50% 50%;">0</span>
<span class="t" role="cell" style="left:631.00px;top:445.27px;font-size:11.5px;color:#667085;-webkit-text-stroke:0.15px currentColor;transform:translateX(-50%) scaleX(0.8100);transform-origin:50% 50%;">0</span>
<span class="t" role="cell" style="left:690.70px;top:445.27px;font-size:11.5px;color:#667085;-webkit-text-stroke:0.15px currentColor;transform:translateX(-50%) scaleX(0.8100);transform-origin:50% 50%;">0</span>
</div>
</div>
<div role="row" class="row">
<span class="t" role="rowheader" style="left:19.00px;top:478.27px;font-size:11.5px;color:#101828;font-weight:700;-webkit-text-stroke:0;transform:scaleX(0.7950);transform-origin:0 50%;">Total Income</span>
<div class="abs lay" role="presentation">
<span class="t" role="cell" style="left:177.70px;top:478.27px;font-size:11.5px;color:#101828;font-weight:700;-webkit-text-stroke:0;transform:translateX(-50%) scaleX(0.8500);transform-origin:50% 50%;">40,272</span>
<span class="t" role="cell" style="left:231.50px;top:478.27px;font-size:11.5px;color:#101828;font-weight:700;-webkit-text-stroke:0;transform:translateX(-50%) scaleX(0.8500);transform-origin:50% 50%;">50,004</span>
<span class="t" role="cell" style="left:288.70px;top:478.27px;font-size:11.5px;color:#101828;font-weight:700;-webkit-text-stroke:0;transform:translateX(-50%) scaleX(0.8500);transform-origin:50% 50%;">90,276</span>
<span class="t" role="cell" style="left:332.70px;top:477.37px;font-size:11.5px;color:#101828;font-weight:700;-webkit-text-stroke:0;transform:translateX(-50%) scaleX(0.8500);transform-origin:50% 50%;">-</span>
<span class="t" role="cell" style="left:373.40px;top:478.27px;font-size:11.5px;color:#101828;font-weight:700;-webkit-text-stroke:0;transform:translateX(-50%) scaleX(0.8500);transform-origin:50% 50%;">80,881</span>
<span class="t" role="cell" style="left:429.90px;top:478.27px;font-size:11.5px;color:#101828;font-weight:700;-webkit-text-stroke:0;transform:translateX(-50%) scaleX(0.8500);transform-origin:50% 50%;">100,449</span>
<span class="t" role="cell" style="left:489.80px;top:478.27px;font-size:11.5px;color:#101828;font-weight:700;-webkit-text-stroke:0;transform:translateX(-50%) scaleX(0.8500);transform-origin:50% 50%;">181,331</span>
<span class="t" role="cell" style="left:534.30px;top:477.37px;font-size:11.5px;color:#101828;font-weight:700;-webkit-text-stroke:0;transform:translateX(-50%) scaleX(0.8500);transform-origin:50% 50%;">-</span>
<span class="t" role="cell" style="left:574.90px;top:478.27px;font-size:11.5px;color:#101828;font-weight:700;-webkit-text-stroke:0;transform:translateX(-50%) scaleX(0.8500);transform-origin:50% 50%;">83,020</span>
<span class="t" role="cell" style="left:631.00px;top:478.27px;font-size:11.5px;color:#101828;font-weight:700;-webkit-text-stroke:0;transform:translateX(-50%) scaleX(0.8500);transform-origin:50% 50%;">103,149</span>
<span class="t" role="cell" style="left:690.70px;top:478.27px;font-size:11.5px;color:#101828;font-weight:700;-webkit-text-stroke:0;transform:translateX(-50%) scaleX(0.8500);transform-origin:50% 50%;">186,169</span>
</div>
</div>
<div role="row" class="row">
<span class="t" role="rowheader" style="left:19.00px;top:511.27px;font-size:11.5px;color:#101828;font-weight:700;-webkit-text-stroke:0;transform:scaleX(0.7620);transform-origin:0 50%;">Expenses</span>
</div>
</div>
</body></html>
